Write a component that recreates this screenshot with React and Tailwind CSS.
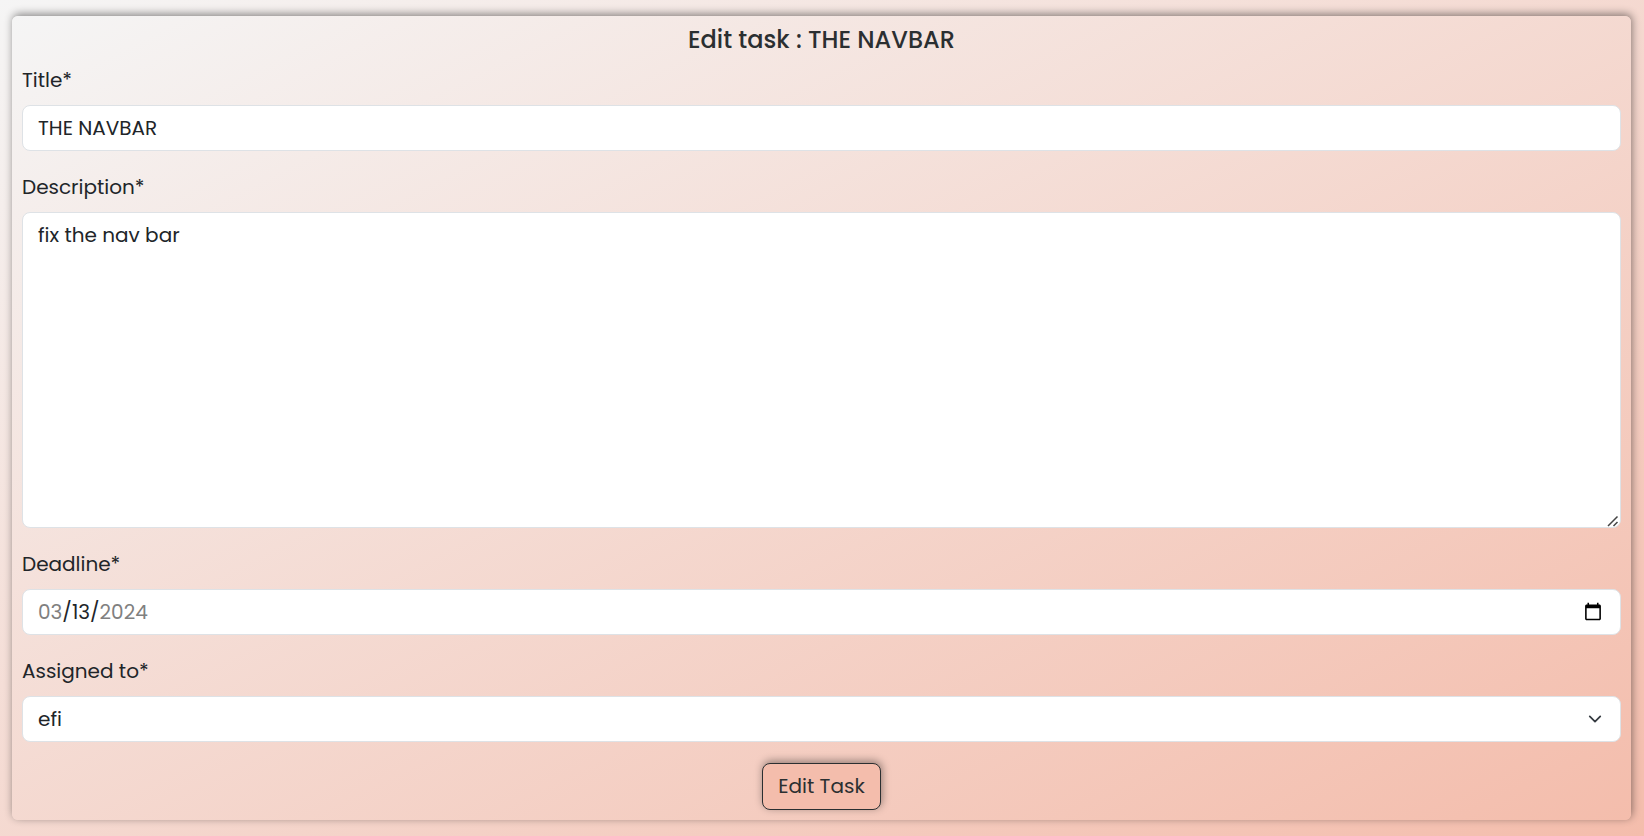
import { useState } from "react";

const labelClass = "block leading-[30px] mb-[10px]";
const controlClass =
  "block w-full h-[46px] rounded-lg border border-[#dee2e6] bg-white px-[15px] text-[#212529] outline-none";

function Field({ id, label, children }) {
  return (
    <div className="mb-[21px]">
      <label htmlFor={id} className={labelClass}>
        {label}
      </label>
      {children}
    </div>
  );
}

export default function App() {
  const [title, setTitle] = useState("THE NAVBAR");
  const [description, setDescription] = useState("fix the nav bar");
  const [deadline, setDeadline] = useState("2024-03-13");

  return (
    <main className="min-h-screen bg-[linear-gradient(to_bottom_right,#f5f5f5,#f4bdac)] py-4 pr-[13px] pl-3 font-[Poppins,Inter,sans-serif] text-xl font-normal text-[#212529]">
      <form
        onSubmit={(e) => e.preventDefault()}
        className="rounded-md bg-[linear-gradient(to_bottom_right,#f5f5f5,#f4bdac)] p-[10px] shadow-[1px_-2px_8px_rgba(0,0,0,0.45)]"
      >
        <h1 className="mb-3 text-center text-2xl leading-[27px] font-medium text-[#2b2f31]">
          Edit task : THE NAVBAR
        </h1>
        <Field id="title" label="Title*">
          <input
            id="title"
            type="text"
            value={title}
            onChange={(e) => setTitle(e.target.value)}
            className={controlClass}
          />
        </Field>
        <Field id="description" label="Description*">
          <div className="relative">
            <textarea
              id="description"
              value={description}
              onChange={(e) => setDescription(e.target.value)}
              className="block h-[316px] w-full resize-y rounded-lg border border-[#dee2e6] bg-white px-[15px] py-[7px] leading-[30px] outline-none [&::-webkit-resizer]:hidden"
            />
            <svg
              viewBox="0 0 12 12"
              className="pointer-events-none absolute right-[2px] bottom-px size-3"
              fill="none"
              stroke="#444"
              strokeWidth="1.5"
            >
              <path d="M1 11 10.5 1.500M6.500 11l4-4" />
            </svg>
          </div>
        </Field>
        <Field id="deadline" label="Deadline*">
          <input
            id="deadline"
            type="date"
            min="2024-03-01"
            max="2024-03-31"
            value={deadline}
            onChange={(e) => setDeadline(e.target.value)}
            className={
              controlClass +
              " [&::-webkit-datetime-edit-day-field]:px-0 [&::-webkit-datetime-edit-month-field]:px-0 [&::-webkit-datetime-edit-year-field]:px-0"
            }
          />
        </Field>
        <Field id="assigned" label="Assigned to*">
          <div className="relative">
            <select id="assigned" className={controlClass + " appearance-none"}>
              <option>efi</option>
            </select>
            <svg
              viewBox="0 0 16 16"
              className="pointer-events-none absolute top-4 right-[19px] size-[14px]"
              fill="none"
              stroke="#343a40"
              strokeWidth="2"
              strokeLinecap="round"
              strokeLinejoin="round"
            >
              <path d="m2 5 6 6 6-6" />
            </svg>
          </div>
        </Field>
        <button
          type="submit"
          className="mx-auto block h-[47px] rounded-lg border border-[#2b2f31] bg-[#f4bdac] px-[15px] pb-0.5 text-[#2b2f31] shadow-[1px_-2px_8px_rgba(0,0,0,0.4)]"
        >
          Edit Task
        </button>
      </form>
    </main>
  );
}
